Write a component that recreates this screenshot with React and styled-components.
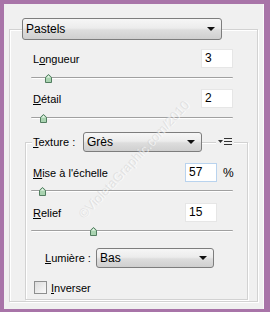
import React from "react";
import styled, { createGlobalStyle } from "styled-components";

const GlobalStyle = createGlobalStyle`
  html, body {
    margin: 0;
    padding: 0;
    background: #a874a8;
  }
  body {
    font-family: "Liberation Sans", Arial, sans-serif;
    font-size: 11px;
    color: #000;
  }
`;

export default function App() {
  return (
    <>
      <GlobalStyle />
      <Frame>
        <Window>
          <Group>
            {/* filter picker sits on the top edge */}
            <GroupHead>
              <Select $w={200} $h={22}>Pastels</Select>
            </GroupHead>

            <ParamRow $top={9}>
              <Label>
                L<u>o</u>ngueur
              </Label>
              <NumBox>3</NumBox>
            </ParamRow>
            <Slider $at={17} />

            <ParamRow $top={6}>
              <Label>
                <u>D</u>étail
              </Label>
              <NumBox>2</NumBox>
            </ParamRow>
            <Slider $at={12} />

            {/* texture options */}
            <SubGroup>
              <SubHead>
                <HeadPart>
                  <Label $w={50}>
                    <u>T</u>exture :
                  </Label>
                  <Select $w={119} $h={20}>Grès</Select>
                </HeadPart>
                <MenuButton>
                  <MenuIcon />
                </MenuButton>
              </SubHead>

              <SubRow $top={11}>
                <Label>
                  <u>M</u>ise à l'échelle
                </Label>
                <NumBox $focus>57</NumBox>
                <Unit>%</Unit>
              </SubRow>
              <SubSlider $at={11} />

              <SubRow $top={6}>
                <Label>
                  <u>R</u>elief
                </Label>
                <NumBox>15</NumBox>
                <Unit />
              </SubRow>
              <SubSlider $at={62} />

              <LightRow>
                <Label $w={51}>
                  <u>L</u>umière :
                </Label>
                <Select $w={118} $h={20}>Bas</Select>
              </LightRow>

              <CheckRow>
                <Check />
                <span>
                  <u>I</u>nverser
                </span>
              </CheckRow>
            </SubGroup>
          </Group>
        </Window>
        <Watermark>©VioletaGraphic.com/2010</Watermark>
      </Frame>
    </>
  );
}

function Select({ children, $w, $h }) {
  return (
    <SelectBox $w={$w} $h={$h}>
      <span>{children}</span>
      <Arrow />
    </SelectBox>
  );
}

function Slider({ $at }) {
  return (
    <Track>
      <Thumb style={{ left: $at - 3 }} />
    </Track>
  );
}

function SubSlider({ $at }) {
  return (
    <SubTrack>
      <Thumb style={{ left: $at - 3 }} />
    </SubTrack>
  );
}

function Thumb({ style }) {
  return (
    <ThumbSvg style={style} width="7" height="9" viewBox="0 0 7 9">
      <path
        d="M3.5 0.5 L6.5 3.3 L6.5 8.5 L0.5 8.5 L0.5 3.3 Z"
        fill="#a9d3b0"
        stroke="#527d60"
        strokeWidth="1"
      />
      <path d="M3.5 1.8 L5.3 3.6 L1.7 3.6 Z" fill="#eef8ef" />
    </ThumbSvg>
  );
}

function MenuIcon() {
  return (
    <svg width="14" height="8" viewBox="0 0 14 8">
      <path d="M0 2 L5 2 L2.5 5 Z" fill="#333" />
      <rect x="6" y="0" width="8" height="1" fill="#333" />
      <rect x="6" y="3" width="8" height="1" fill="#333" />
      <rect x="6" y="6" width="8" height="1" fill="#333" />
    </svg>
  );
}

const Frame = styled.div`
  position: relative;
  width: 270px;
  height: 312px;
  padding: 4px 6px 3px 4px;
  box-sizing: border-box;
  overflow: hidden;
`;

const Window = styled.div`
  height: 305px;
  background: #f0f0f0;
  padding: 25px 5px 0 5px;
  box-sizing: border-box;
  border-right: 1px solid #fafafa;
`;

// - outer group
const Group = styled.div`
  height: 273px;
  border: 1px solid #d2d2d2;
  box-shadow: 1px 1px 0 #fff, inset 1px 1px 0 #fff;
  box-sizing: border-box;
  display: flex;
  flex-direction: column;
`;

const GroupHead = styled.div`
  display: flex;
  margin-top: -12px;
  padding-left: 12px;
`;

const ParamRow = styled.div`
  display: flex;
  align-items: center;
  height: 19px;
  margin-top: ${(p) => p.$top}px;
  padding: 0 24px 0 23px;
`;

const Label = styled.span`
  flex: ${(p) => (p.$w ? "none" : "1")};
  width: ${(p) => (p.$w ? `${p.$w}px` : "auto")};
  white-space: nowrap;
`;

const NumBox = styled.div`
  width: 32px;
  height: 19px;
  box-sizing: border-box;
  background: #fff;
  border: 1px solid ${(p) => (p.$focus ? "#b9d3ee" : "#e6e6e6")};
  font-size: 12px;
  line-height: 17px;
  padding-left: 3px;
`;

const Unit = styled.span`
  width: 30px;
  padding-left: 6px;
  box-sizing: border-box;
  font-size: 12px;
`;

// - sliders
const Track = styled.div`
  position: relative;
  height: 12px;
  margin: 4px 24px 0 21px;

  &::before {
    content: "";
    position: absolute;
    left: 0;
    right: 0;
    top: 5px;
    height: 1px;
    background: #a0a0a0;
    border-bottom: 1px solid #fff;
    border-radius: 1px;
  }
`;

const SubTrack = styled(Track)`
  margin: 3px 14px 0 5px;
`;

const ThumbSvg = styled.svg`
  position: absolute;
  top: 2px;
`;

// - texture group
const SubGroup = styled.div`
  flex: 1;
  margin: 19px 9px 1px 15px;
  border: 1px solid #d2d2d2;
  box-shadow: 1px 1px 0 #fff, inset 1px 1px 0 #fff;
  display: flex;
  flex-direction: column;
  padding-bottom: 5px;
`;

const SubHead = styled.div`
  display: flex;
  align-items: center;
  margin-top: -11px;
  padding-left: 6px;
`;

const HeadPart = styled.div`
  display: flex;
  align-items: center;
  background: #f0f0f0;
  padding-left: 1px;
`;

const MenuButton = styled.div`
  display: flex;
  align-items: center;
  background: #f0f0f0;
  margin-left: 14px;
  padding: 0 2px;
  height: 12px;
`;

const SubRow = styled(ParamRow)`
  padding: 0 0 0 7px;
`;

const LightRow = styled.div`
  display: flex;
  align-items: center;
  margin-top: 11px;
  padding-left: 19px;
`;

const CheckRow = styled.div`
  display: flex;
  align-items: center;
  gap: 4px;
  margin-top: 13px;
  padding-left: 8px;
`;

const Check = styled.span`
  width: 13px;
  height: 13px;
  box-sizing: border-box;
  border: 1px solid #8e8f8f;
  background: linear-gradient(135deg, #dcdcdc, #fafafa);
`;

// - dropdowns
const SelectBox = styled.div`
  display: flex;
  align-items: center;
  justify-content: space-between;
  width: ${(p) => p.$w}px;
  height: ${(p) => p.$h}px;
  box-sizing: border-box;
  padding: 0 6px 0 3px;
  border: 1px solid #7d7d7d;
  border-radius: 3px;
  background: linear-gradient(#f6f6f6 0%, #ececec 45%, #dddddd 55%, #cfcfcf 100%);
  font-size: 12px;
`;

const Arrow = styled.span`
  width: 0;
  height: 0;
  border-left: 4px solid transparent;
  border-right: 4px solid transparent;
  border-top: 4px solid #111;
`;

const Watermark = styled.div`
  position: absolute;
  left: 56px;
  top: 152px;
  transform: rotate(-47deg);
  font-size: 13px;
  white-space: nowrap;
  color: rgba(190, 190, 190, 0.3);
  text-shadow: 1px 1px 0 rgba(255, 255, 255, 0.6);
  pointer-events: none;
`;
